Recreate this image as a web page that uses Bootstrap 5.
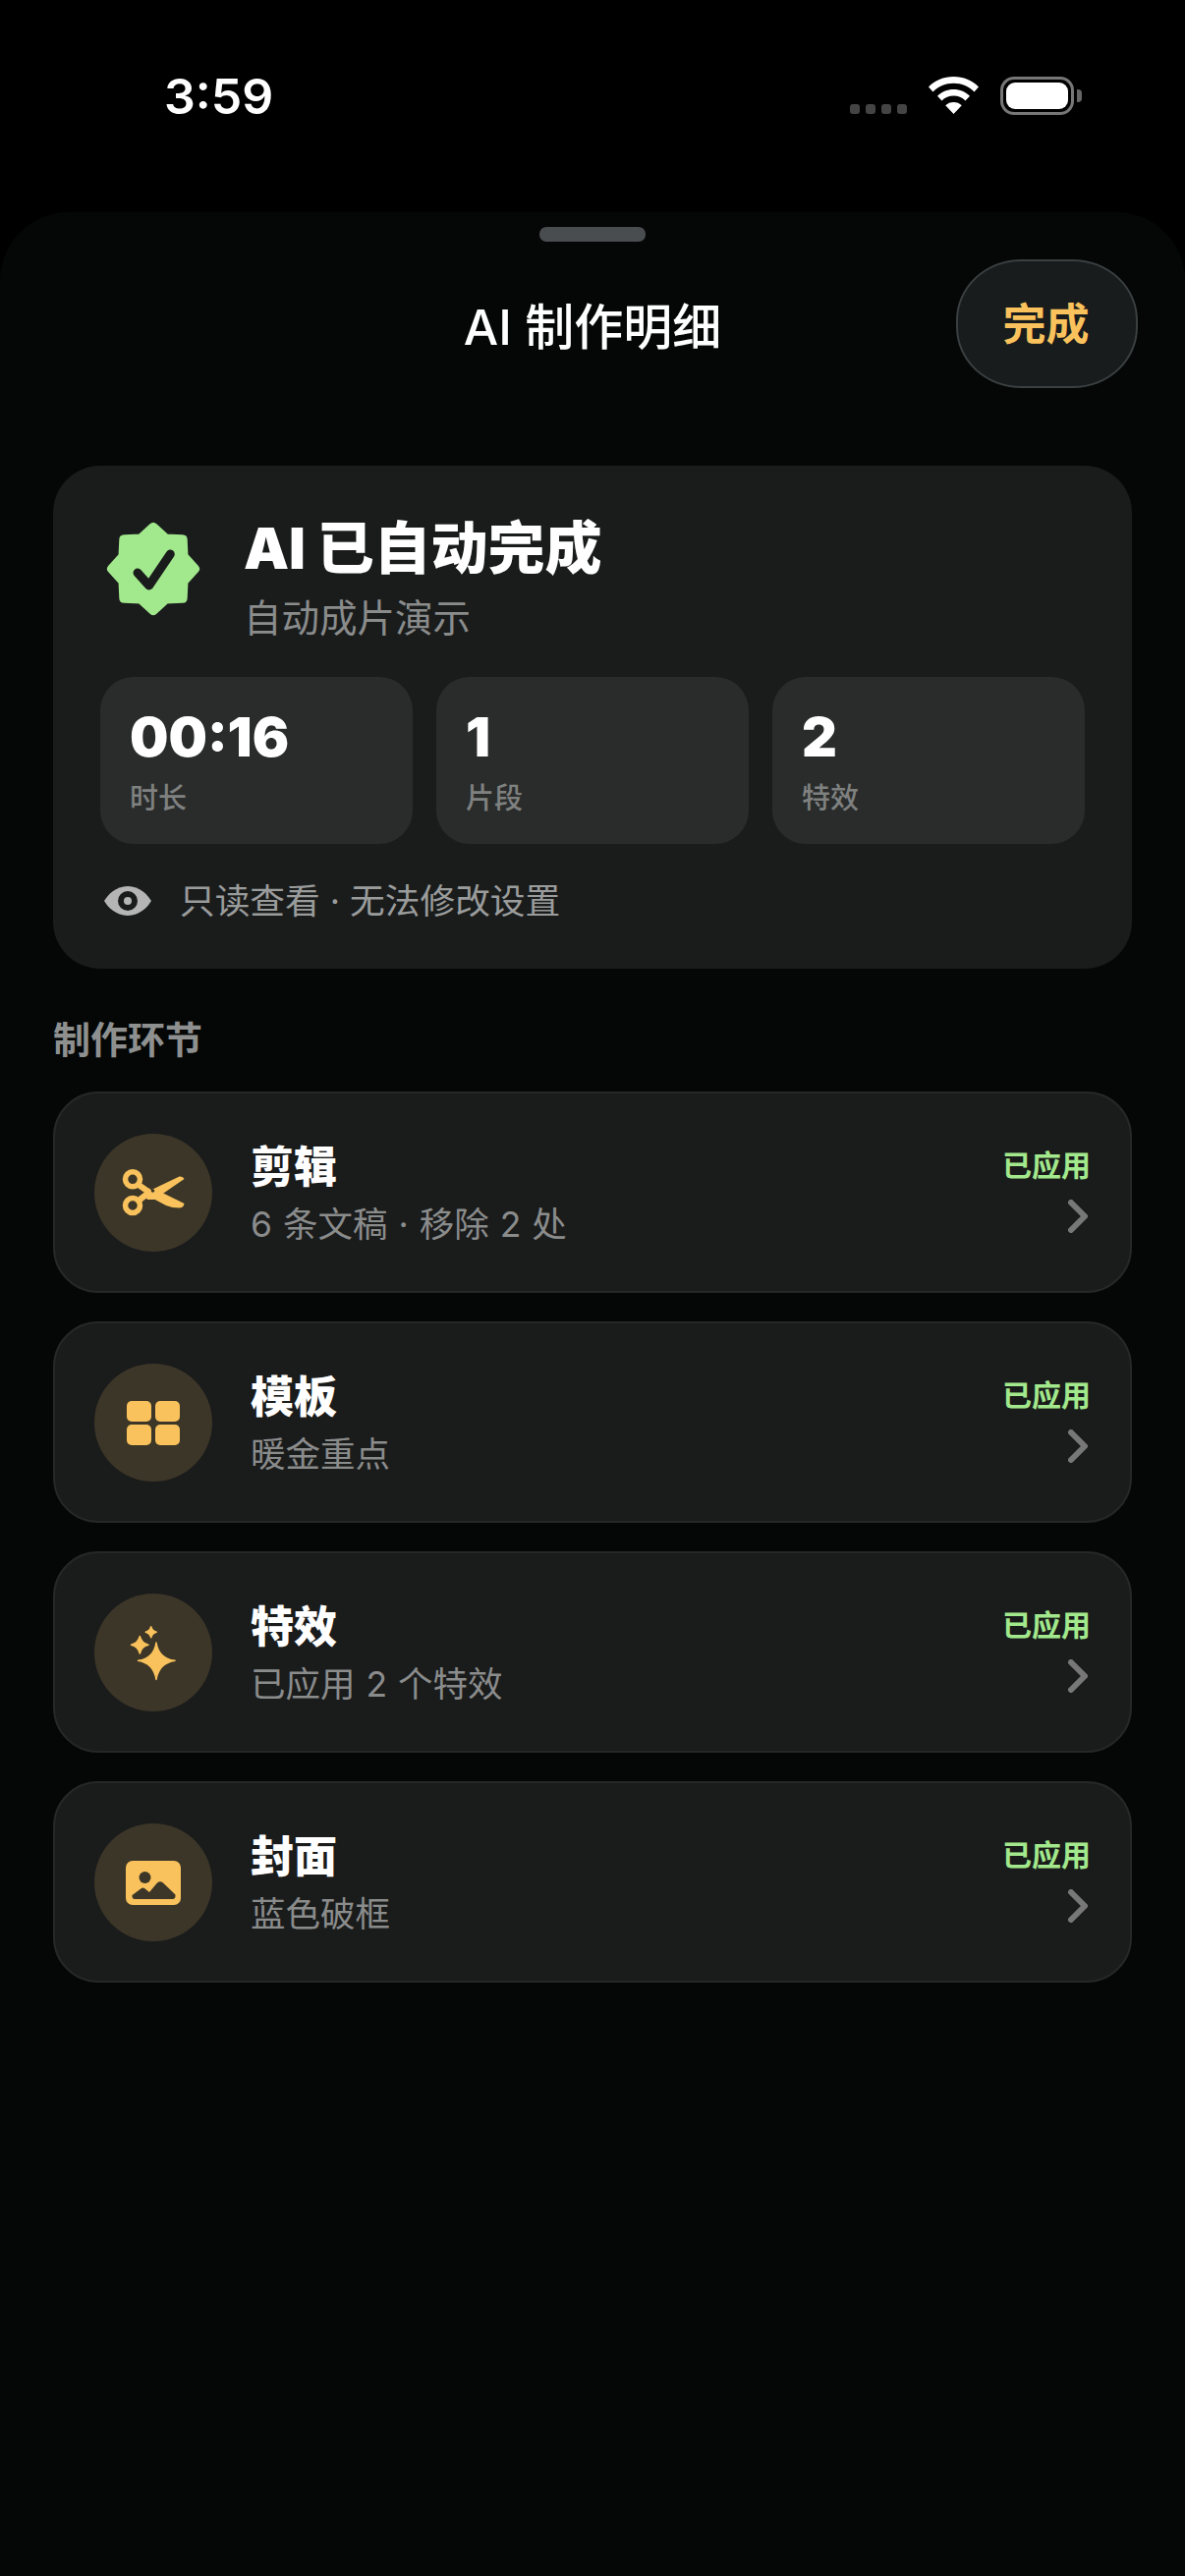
<!DOCTYPE html>
<html lang="zh-CN">
<head>
    <meta charset="UTF-8">
    <meta name="viewport" content="width=device-width, initial-scale=1.0">
    <title>AI 制作明细</title>
    <link rel="stylesheet" href="https://cdn.jsdelivr.net/npm/bootstrap@5.3.0/dist/css/bootstrap.min.css">
    <style>
        body { background: #000; color: #fff; font-family: Inter, "Noto Sans CJK SC", sans-serif; width: 1206px; height: 2622px; overflow: hidden; }
        .status-bar { height: 216px; padding: 70px 105px 0 167px; }
        .status-time { font-size: 50px; font-weight: 600; line-height: 56px; }
        .status-icons { padding-top: 8px; }
        .sig-dots { gap: 6px; margin: 28px 22px 0 0; }
        .sig-dots span { width: 10px; height: 10px; border-radius: 3px; background: #444; }
        .battery { width: 75px; height: 39px; border: 3px solid #777; border-radius: 14px; padding: 3px; margin-left: 22px; }
        .battery div { background: #fff; border-radius: 9px; height: 100%; }
        .battery-nib { width: 5px; height: 13px; background: #666; border-radius: 0 4px 4px 0; margin: 13px 0 0 3px; }
        .sheet { background: #050707; border-radius: 70px 70px 0 0; height: 2406px; padding: 15px 54px 0; position: relative; }
        .grabber { width: 108px; height: 15px; background: #4a4d4f; border-radius: 7px; margin: 0 auto; }
        .sheet-head { height: 149px; margin-top: 18px; }
        .sheet-title { font-size: 50px; font-weight: 500; line-height: 60px; padding-top: 39px; }
        .done-btn { position: absolute; top: 48px; right: 48px; width: 185px; height: 131px; border-radius: 66px / 62px; border: 2px solid #3a3f40; background: #181c1d; color: #f9c25c; font-size: 44px; font-weight: 700; padding: 0 2px 0 0; }
        .sum-card { background: #1a1c1c; border-radius: 48px; height: 512px; margin-top: 61px; padding: 48px 48px 0; border: 0; }
        .sum-title { font-size: 58px; font-weight: 900; line-height: 66px; padding-top: 3px; }
        .sum-sub { font-size: 38.5px; color: #8a8c8c; line-height: 50px; margin-top: 13px; }
        .sum-head { gap: 44px; padding-left: 6px; height: 167px; }
        .stat-grid { display: grid; grid-template-columns: repeat(3, 318px); gap: 24px; }
        .stat-tile { background: #2a2c2c; border-radius: 34px; height: 170px; padding: 30px 0 0 30px; }
        .stat-val { font-size: 55.5px; font-weight: 900; line-height: 62px; }
        .stat-lbl { font-size: 29px; font-weight: 500; color: #7f8180; line-height: 40px; margin-top: 12px; }
        .readonly { gap: 29px; padding: 0 0 0 4px; margin-top: 33px; font-size: 35.7px; color: #9a9c9c; line-height: 50px; }
        .sec-title { font-size: 38px; font-weight: 700; color: #8e9090; line-height: 50px; margin: 47px 0 0; }
        .step-list { gap: 29px; margin-top: 28px; }
        .step-row { background: #1a1b1b; border: 2px solid #262828; border-radius: 46px; height: 205px; padding: 0 40px; }
        .step-ico { width: 120px; height: 120px; border-radius: 50%; background: #3c3628; flex: none; }
        .step-ico svg { display: block; }
        .step-main { margin-left: 39px; padding-top: 5px; }
        .step-name { font-size: 44px; font-weight: 900; line-height: 56px; }
        .step-sub { font-size: 35.5px; color: #8a8c8c; line-height: 50px; margin-top: 6px; word-spacing: 1px; }
        .step-tag { font-size: 30px; font-weight: 700; color: #a2e88c; line-height: 36px; }
        .step-side { margin-bottom: 4px; }
        .step-side svg { margin: 17px 3px 0 0; }
    </style>
</head>
<body>
<div class="status-bar d-flex justify-content-between">
    <div class="status-time">3:59</div>
    <div class="status-icons d-flex align-items-start">
        <div class="sig-dots d-flex"><span></span><span></span><span></span><span></span></div>
        <svg width="51" height="38" viewBox="0 0 51 38" fill="#fff">
            <path d="M25.5 0 C35.5 0 44.5 3.8 51 10.5 L46.5 15.5 C41 10 33.6 6.8 25.5 6.8 C17.4 6.8 10 10 4.5 15.5 L0 10.5 C6.5 3.8 15.5 0 25.5 0Z"/>
            <path d="M25.5 13 C32 13 37.8 15.5 42 19.8 L37.5 24.6 C34.3 21.4 30.1 19.6 25.5 19.6 C20.9 19.6 16.7 21.4 13.5 24.6 L9 19.8 C13.2 15.5 19 13 25.5 13Z"/>
            <path d="M25.5 26 C28.7 26 31.6 27.2 33.8 29.3 L25.5 38 L17.2 29.3 C19.4 27.2 22.3 26 25.5 26Z"/>
        </svg>
        <div class="battery"><div></div></div>
        <div class="battery-nib"></div>
    </div>
</div>

<div class="sheet">
    <div class="grabber"></div>
    <div class="sheet-head text-center">
        <div class="sheet-title">AI 制作明细</div>
    </div>
    <button class="done-btn btn" type="button">完成</button>

    <div class="sum-card card">
        <div class="sum-head d-flex align-items-start">
            <svg width="96" height="96" viewBox="0 0 96 96" class="flex-none" style="margin-top:9px">
                <path d="M48 6 L60.6 17.5 L77.7 18.3 L78.5 35.4 L90 48 L78.5 60.6 L77.7 77.7 L60.6 78.5 L48 90 L35.4 78.5 L18.3 77.7 L17.5 60.6 L6 48 L17.5 35.4 L18.3 18.3 L35.4 17.5Z" fill="#a2e88c" stroke="#a2e88c" stroke-width="10" stroke-linejoin="round"/>
                <path d="M32 52 L43.7 65 L65.3 33" fill="none" stroke="#1a1c1c" stroke-width="9" stroke-linecap="round" stroke-linejoin="round"/>
            </svg>
            <div>
                <div class="sum-title">AI 已自动完成</div>
                <div class="sum-sub">自动成片演示</div>
            </div>
        </div>
        <div class="stat-grid">
            <div class="stat-tile"><div class="stat-val">00:16</div><div class="stat-lbl">时长</div></div>
            <div class="stat-tile"><div class="stat-val">1</div><div class="stat-lbl">片段</div></div>
            <div class="stat-tile"><div class="stat-val">2</div><div class="stat-lbl">特效</div></div>
        </div>
        <div class="readonly d-flex align-items-center">
            <svg width="48" height="30" viewBox="0 0 48 30">
                <path d="M24 0 C36 0 44.5 9 48 15 C44.5 21 36 30 24 30 C12 30 3.5 21 0 15 C3.5 9 12 0 24 0Z" fill="#b5b5b5"/>
                <circle cx="24" cy="15" r="10" fill="#1a1c1c"/>
                <circle cx="24" cy="15" r="4" fill="#b5b5b5"/>
            </svg>
            <span>只读查看 · 无法修改设置</span>
        </div>
    </div>

    <div class="sec-title">制作环节</div>

    <div class="step-list d-flex flex-column">
        <div class="step-row d-flex align-items-center">
            <div class="step-ico">
                <svg width="120" height="120" viewBox="0 0 120 120" fill="#f9c25c">
                    <circle cx="39" cy="46.3" r="7.5" fill="none" stroke="#f9c25c" stroke-width="5.5"/>
                    <circle cx="39" cy="73" r="7.5" fill="none" stroke="#f9c25c" stroke-width="5.5"/>
                    <path d="M45 52 L58 61 M45 68 L58 58" stroke="#f9c25c" stroke-width="6" fill="none"/>
                    <path d="M50 61 L86.5 43.5 Q90.5 43 91.5 46 L61 67 L54 67Z"/>
                    <path d="M64 57.5 L91.5 71 Q91 75 87 75.5 Q79 75.5 73 73 L58 65Z"/>
                    <circle cx="59.5" cy="58" r="1.8" fill="#3c3628"/>
                </svg>
            </div>
            <div class="step-main flex-grow-1">
                <div class="step-name">剪辑</div>
                <div class="step-sub">6 条文稿 · 移除 2 处</div>
            </div>
            <div class="step-side d-flex flex-column align-items-end">
                <div class="step-tag">已应用</div>
                <svg width="20" height="34" viewBox="0 0 20 34"><path d="M3 3 L17 17 L3 31" fill="none" stroke="#777" stroke-width="6" stroke-linecap="round" stroke-linejoin="round"/></svg>
            </div>
        </div>
        <div class="step-row d-flex align-items-center">
            <div class="step-ico">
                <svg width="120" height="120" viewBox="0 0 120 120" fill="#f9c25c">
                    <rect x="33" y="38" width="25" height="21" rx="5"/>
                    <rect x="62" y="38" width="25" height="21" rx="5"/>
                    <rect x="33" y="62" width="25" height="21" rx="5"/>
                    <rect x="62" y="62" width="25" height="21" rx="5"/>
                </svg>
            </div>
            <div class="step-main flex-grow-1">
                <div class="step-name">模板</div>
                <div class="step-sub">暖金重点</div>
            </div>
            <div class="step-side d-flex flex-column align-items-end">
                <div class="step-tag">已应用</div>
                <svg width="20" height="34" viewBox="0 0 20 34"><path d="M3 3 L17 17 L3 31" fill="none" stroke="#777" stroke-width="6" stroke-linecap="round" stroke-linejoin="round"/></svg>
            </div>
        </div>
        <div class="step-row d-flex align-items-center">
            <div class="step-ico">
                <svg width="120" height="120" viewBox="0 0 120 120" fill="#f9c25c" stroke="#f9c25c" stroke-width="1.5" stroke-linejoin="round">
                    <path d="M63 50 Q65.5 66 82 68.3 Q65.5 71 63 87.5 Q60.5 71 44.5 68.3 Q60.5 66 63 50Z"/>
                    <path d="M46.3 43.5 Q48 50.5 55 52.3 Q48 54 46.3 61 Q44.6 54 37.5 52.3 Q44.6 50.5 46.3 43.5Z"/>
                    <path d="M57.7 33.8 Q58.8 38.2 63.2 39.3 Q58.8 40.4 57.7 44.8 Q56.6 40.4 52.2 39.3 Q56.6 38.2 57.7 33.8Z"/>
                </svg>
            </div>
            <div class="step-main flex-grow-1">
                <div class="step-name">特效</div>
                <div class="step-sub">已应用 2 个特效</div>
            </div>
            <div class="step-side d-flex flex-column align-items-end">
                <div class="step-tag">已应用</div>
                <svg width="20" height="34" viewBox="0 0 20 34"><path d="M3 3 L17 17 L3 31" fill="none" stroke="#777" stroke-width="6" stroke-linecap="round" stroke-linejoin="round"/></svg>
            </div>
        </div>
        <div class="step-row d-flex align-items-center">
            <div class="step-ico">
                <svg width="120" height="120" viewBox="0 0 120 120">
                    <rect x="32" y="38" width="56" height="45" rx="7" fill="#f9c25c"/>
                    <circle cx="51.5" cy="55" r="6" fill="#3c3628"/>
                    <path d="M38.5 73 L48 66 Q49.5 65 51 66 L56 70 L64 60.5 Q67 58 70 60.5 L82.5 72.5 V74 Q82.5 77 79.5 77 H41 Q38.5 77 38.5 74Z" fill="#3c3628"/>
                </svg>
            </div>
            <div class="step-main flex-grow-1">
                <div class="step-name">封面</div>
                <div class="step-sub">蓝色破框</div>
            </div>
            <div class="step-side d-flex flex-column align-items-end">
                <div class="step-tag">已应用</div>
                <svg width="20" height="34" viewBox="0 0 20 34"><path d="M3 3 L17 17 L3 31" fill="none" stroke="#777" stroke-width="6" stroke-linecap="round" stroke-linejoin="round"/></svg>
            </div>
        </div>
    </div>
</div>
<script src="https://cdn.jsdelivr.net/npm/bootstrap@5.3.0/dist/js/bootstrap.bundle.min.js"></script>
</body>
</html>
